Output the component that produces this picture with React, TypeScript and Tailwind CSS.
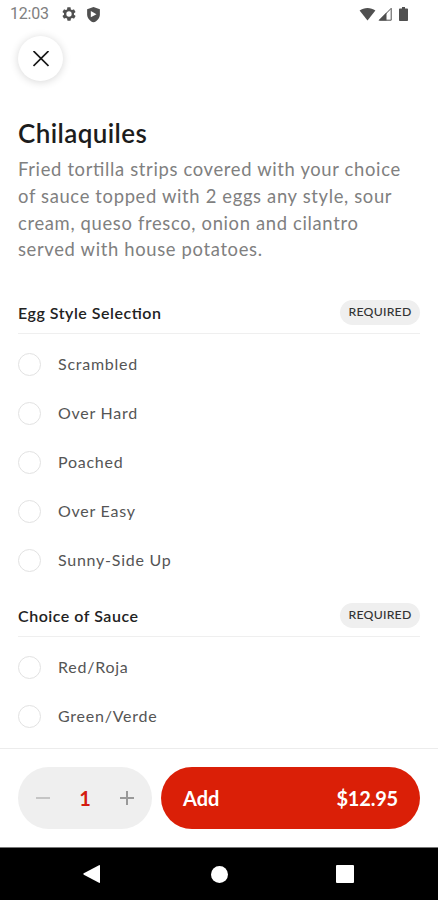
import type { ReactNode } from "react";

const sections = [
  {
    title: "Egg Style Selection",
    options: ["Scrambled", "Over Hard", "Poached", "Over Easy", "Sunny-Side Up"],
  },
  {
    title: "Choice of Sauce",
    options: ["Red/Roja", "Green/Verde"],
  },
];

function StatusBar() {
  return (
    <div className="flex h-7 shrink-0 items-center pl-[10px] pr-[30px] text-[#505050]">
      <span className="w-[51px] font-['Roboto',sans-serif] text-[16px] leading-7 tracking-[-0.2px] text-[#808080]">
        12:03
      </span>
      <svg className="h-4 w-4" viewBox="0 0 24 24" fill="currentColor">
        <path
          fillRule="evenodd"
          d="M19.400 13c.1-.3.1-.7.1-1s0-.7-.1-1l2.100-1.600c.2-.2.3-.4.1-.7l-2-3.400c-.1-.2-.4-.3-.6-.2l-2.500 1c-.5-.4-1.100-.7-1.700-1l-.4-2.600c0-.3-.2-.5-.5-.5h-4c-.2 0-.4.200-.5.500L9.100 5.100c-.6.300-1.200.600-1.700 1l-2.400-1c-.3-.1-.5 0-.6.200l-2 3.400c-.2.300-.1.500.1.700L4.600 11c-.1.300-.1.700-.1 1s0 .700.100 1l-2.100 1.600c-.2.200-.3.400-.1.700l2 3.400c.1.200.3.300.6.200l2.400-1c.5.400 1.100.700 1.700 1l.4 2.600c.1.300.3.500.5.500h4c.3 0 .5-.2.500-.5l.4-2.600c.6-.3 1.200-.6 1.700-1l2.500 1c.2.100.5 0 .6-.2l2-3.400c.2-.3.1-.5-.1-.7L19.400 13zM12 16a4 4 0 1 1 0-8 4 4 0 0 1 0 8z"
        />
      </svg>
      <svg className="ml-2 h-[17px] w-[17px]" viewBox="0 0 24 24" fill="currentColor">
        <path d="M12 1.500 3 4.500v7c0 5.400 3.800 9.900 9 11.500 5.200-1.600 9-6.100 9-11.500v-7z" />
        <path d="M8.200 7v9l8-4.500z" fill="white" />
      </svg>
      <div className="ml-auto flex items-center">
        <svg className="h-[14px] w-[17px]" viewBox="0 0 17 14" fill="currentColor">
          <path d="M.6 3.600C5 .1 12 .1 16.400 3.600L8.500 13.500z" />
        </svg>
        <svg className="ml-[2px] h-[14px] w-[14px]" viewBox="0 0 14 14">
          <path d="M8.500 5.500V13.500H.5z" fill="currentColor" />
          <path d="M1.500 13.200 13.200 1.300V13.200z" fill="none" stroke="currentColor" strokeWidth="1" />
        </svg>
        <svg className="ml-[7px] h-[14px] w-[9px]" viewBox="0 0 9 14" fill="currentColor">
          <path d="M3 0h3v1.500h2.200q.8 0 .8.800v10.900q0 .8-.8.800H.8q-.8 0-.8-.8V2.300q0-.8.800-.8H3z" />
        </svg>
      </div>
    </div>
  );
}

function Option({ children }: { children: ReactNode }) {
  return (
    <label className="flex h-[49px] items-center">
      <span className="h-[23px] w-[23px] rounded-full border-[1.5px] border-[#e2e2e2]" />
      <span className="ml-[17px] pb-[2px] text-[16px] tracking-[0.75px] text-[#555]">
        {children}
      </span>
    </label>
  );
}

export default function App() {
  return (
    <div className="flex h-[900px] w-[438px] flex-col overflow-hidden bg-white font-['Lato',sans-serif]">
      <StatusBar />
      <main className="min-h-0 flex-1 overflow-hidden px-[18px] pt-2">
        <button className="flex h-[45px] w-[45px] items-center justify-center rounded-full bg-white shadow-[0_1px_9px_rgba(0,0,0,0.16)]">
          <svg className="h-4 w-4" viewBox="0 0 16 16" stroke="#181818" strokeWidth="1.7">
            <path d="M.5 0l15 15M15.500 0l-15 15" />
          </svg>
        </button>

        <h1 className="mt-[34px] text-[26px] font-semibold leading-9 tracking-[0.4px] text-[#1c1c1c]">
          Chilaquiles
        </h1>
        <p className="mt-[5px] whitespace-nowrap text-[18.4px] leading-[26.8px] tracking-[0.66px] text-[#808080] [font-feature-settings:'liga']">
          Fried tortilla strips covered with your choice
          <br />
          of sauce topped with 2 eggs any style, sour
          <br />
          cream, queso fresco, onion and cilantro
          <br />
          served with house potatoes.
        </p>

        <div className="mt-[37px] flex flex-col gap-[18px]">
          {sections.map((section) => (
            <section key={section.title}>
              <div className="mb-[7px] flex h-[34px] items-start justify-between border-b border-[#efefef]">
                <h2 className="text-[16px] font-semibold leading-[25px] tracking-[0.52px] text-[#222] [font-feature-settings:'liga']">
                  {section.title}
                </h2>
                <span className="flex h-[25px] w-20 items-center justify-center rounded-full bg-[#efefef] text-[12.3px] font-medium tracking-[0.2px] text-[#333]">
                  REQUIRED
                </span>
              </div>
              <div className="-mt-px">
                {section.options.map((option) => (
                  <Option key={option}>{option}</Option>
                ))}
              </div>
            </section>
          ))}
        </div>
      </main>

      <footer className="flex h-[99px] shrink-0 gap-[9px] border-t border-[#ececec] px-[18px] pt-[18px]">
        <div className="flex h-[62px] w-[134px] items-center justify-between rounded-full bg-[#efefef] px-[18px]">
          <svg className="h-[14px] w-[14px]" viewBox="0 0 14 14" stroke="#bdbdbd" strokeWidth="1.700">
            <path d="M0 7h14" />
          </svg>
          <span className="text-[20px] font-bold text-[#d41c10]">1</span>
          <svg className="h-[14px] w-[14px]" viewBox="0 0 14 14" stroke="#999" strokeWidth="2">
            <path d="M0 7h14M7 0v14" />
          </svg>
        </div>
        <button className="flex h-[62px] flex-1 items-center justify-between rounded-full bg-[#da1f07] px-[22px] text-[20px] font-bold text-white">
          <span>Add</span>
          <span className="tracking-[-0.2px]">$12.95</span>
        </button>
      </footer>

      <nav className="flex h-[53px] shrink-0 items-center justify-between border-t border-[#777] bg-black pl-[83px] pr-[84px]">
        <svg className="h-[18px] w-[18px]" viewBox="0 0 18 18" fill="white">
          <path d="M.8 8.300 16 .2q1-.4 1 .6v16.400q0 1-1 .6L.8 9.700q-1-.7 0-1.400z" />
        </svg>
        <span className="ml-px h-[17px] w-[17px] rounded-full bg-white" />
        <span className="h-[18px] w-[18px] rounded-[1px] bg-white" />
      </nav>
    </div>
  );
}
